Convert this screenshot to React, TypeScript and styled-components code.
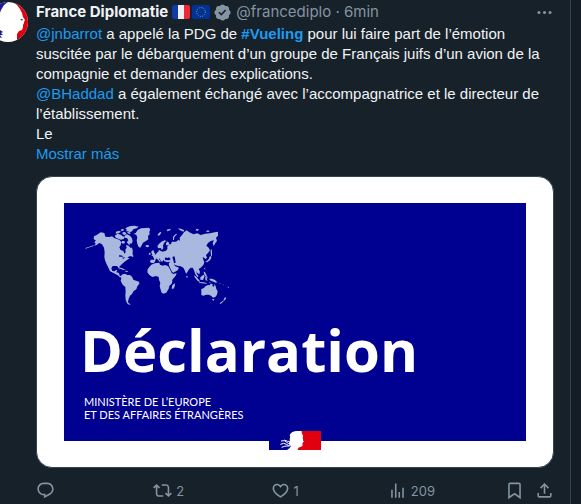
import React from "react";
import styled, { createGlobalStyle } from "styled-components";

const GlobalStyle = createGlobalStyle`
  *, *::before, *::after { box-sizing: border-box; }
  html { background: #141d26; }
  body {
    margin: 0;
    overflow: hidden;
    color: #f0f3f4;
    font-family: Inter, "Liberation Sans", sans-serif;
    font-size: 15px;
    line-height: 20px;
  }
`;

const Timeline = styled.main`
  min-height: 100vh;
  margin-right: 10px;
  padding: 2px 16px 0 0;
  border-right: 1px solid #38444d;
  background: #17212a;
  overflow: hidden;
`;

const Post = styled.article`
  display: flex;
  gap: 8px;
  margin-left: -12px;
`;

const AvatarLink = styled.a`
  flex: none;
  width: 40px;
  height: 40px;
  border-radius: 50%;
  overflow: hidden;
  svg { display: block; width: 100%; height: 100%; }
`;

const Content = styled.div`
  flex: 1;
  min-width: 0;
`;

const Header = styled.header`
  display: flex;
  align-items: center;
  height: 20px;
  margin-bottom: 2px;
`;

const Name = styled.a`
  color: #f0f3f4;
  font-weight: 700;
  text-decoration: none;
  white-space: nowrap;
`;

const Flags = styled.span`
  display: flex;
  gap: 2px;
  margin: 0 3px 0 4px;
`;

const Badge = styled.span`
  display: flex;
  margin-right: 4px;
  color: #8494a2;
`;

const Meta = styled.span`
  color: #8494a2;
  white-space: nowrap;
  a { color: inherit; text-decoration: none; }
`;

const IconButton = styled.button<{ $push?: boolean }>`
  display: flex;
  align-items: center;
  gap: 4px;
  padding: 0;
  margin-left: ${(p) => (p.$push ? "auto" : "0")};
  border: 0;
  background: none;
  color: #8494a2;
  font: inherit;
  font-size: 13px;
  line-height: 16px;
  cursor: pointer;
`;

const Body = styled.p`
  margin: 0;
  font-family: "Liberation Sans", Arial, sans-serif;
`;

const TextLink = styled.a<{ $strong?: boolean }>`
  color: #1d9bf0;
  font-weight: ${(p) => (p.$strong ? 700 : 400)};
  text-decoration: none;
`;

const Media = styled.figure`
  margin: 12px 0 0;
  padding: 26px 27px;
  border: 1px solid #38444d;
  border-radius: 16px;
  background: #fff;
`;

const Poster = styled.div`
  position: relative;
  padding: 12px 16px 20px;
  background: #000091;
  color: #fff;
`;

const MapArt = styled.svg`
  display: block;
  width: 160px;
  height: 100px;
`;

const Headline = styled.h2`
  margin: 5px 0 0;
  font-family: "Open Sans", sans-serif;
  font-size: 58px;
  font-weight: 700;
  line-height: 60px;
`;

const Ministry = styled.p`
  margin: 15px 0 0;
  padding-left: 4px;
  font-family: Lato, sans-serif;
  font-size: 11px;
  line-height: 13px;
`;

const Emblem = styled.svg`
  position: absolute;
  left: 50%;
  bottom: -9px;
  width: 52px;
  height: 19px;
  transform: translateX(-50%);
`;

const Actions = styled.footer`
  display: flex;
  margin-top: 13px;
`;

const ActionSlot = styled.div`
  flex: 1;
`;

const EndActions = styled.div`
  display: flex;
  gap: 11px;
`;

const paths = {
  reply:
    "M1.751 10c0-4.42 3.584-8 8.005-8h4.366c4.49 0 8.129 3.64 8.129 8.13 0 2.96-1.607 5.68-4.196 7.11l-8.054 4.46v-3.69h-.067c-4.49.1-8.183-3.51-8.183-8.01zm8.005-6c-3.317 0-6.005 2.69-6.005 6 0 3.37 2.77 6.08 6.138 6.01l.351-.01h1.761v2.3l5.087-2.81c1.951-1.08 3.163-3.13 3.163-5.36 0-3.39-2.744-6.13-6.129-6.13H9.756z",
  repost:
    "M4.5 3.88l4.432 4.14-1.364 1.46L5.5 7.55V16c0 1.1.896 2 2 2H13v2H7.5c-2.209 0-4-1.79-4-4V7.55L1.432 9.48.068 8.02 4.5 3.88zM16.5 6H11V4h5.5c2.209 0 4 1.79 4 4v8.45l2.068-1.93 1.364 1.46-4.432 4.14-4.432-4.14 1.364-1.46 2.068 1.93V8c0-1.1-.896-2-2-2z",
  like:
    "M16.697 5.5c-1.222-.06-2.679.51-3.89 2.16l-.805 1.09-.806-1.09C9.984 6.01 8.526 5.44 7.304 5.5c-1.243.07-2.349.78-2.91 1.91-.552 1.12-.633 2.78.479 4.82 1.074 1.97 3.257 4.27 7.129 6.61 3.87-2.34 6.052-4.64 7.126-6.61 1.111-2.04 1.03-3.7.477-4.82-.561-1.13-1.666-1.84-2.908-1.91zm4.187 7.69c-1.351 2.48-4.001 5.12-8.379 7.67l-.503.3-.504-.3c-4.379-2.55-7.029-5.19-8.382-7.67-1.36-2.5-1.41-4.86-.514-6.67.887-1.79 2.647-2.91 4.601-3.01 1.651-.09 3.368.56 4.798 2.01 1.429-1.45 3.146-2.1 4.796-2.01 1.954.1 3.714 1.22 4.601 3.01.896 1.81.846 4.17-.514 6.67z",
  views:
    "M8.75 21V3h2v18h-2zM18 21V8.5h2V21h-2zM4 21l.004-10h2L6 21H4zm9.248 0v-7h2v7h-2z",
  bookmark:
    "M4 4.5C4 3.12 5.119 2 6.5 2h11C18.881 2 20 3.12 20 4.5v18.44l-8-5.71-8 5.71V4.5zM6.5 4c-.276 0-.5.22-.5.5v14.56l6-4.29 6 4.29V4.5c0-.28-.224-.5-.5-.5h-11z",
  share:
    "M12 2.59l5.7 5.7-1.41 1.42L13 6.41V16h-2V6.41l-3.3 3.3-1.41-1.42L12 2.59zM21 15l-.02 3.51c0 1.38-1.12 2.49-2.5 2.49H5.5C4.11 21 3 19.88 3 18.5V15h2v3.5c0 .28.22.5.5.5h12.98c.28 0 .5-.22.5-.5L19 15h2z",
  more:
    "M3 12c0-1.1.9-2 2-2s2 .9 2 2-.9 2-2 2-2-.9-2-2zm9 2c1.1 0 2-.9 2-2s-.9-2-2-2-2 .9-2 2 .9 2 2 2zm7 0c1.1 0 2-.9 2-2s-.9-2-2-2-2 .9-2 2 .9 2 2 2z",
  verified:
    "M20.396 11c-.018-.646-.215-1.275-.57-1.816-.354-.54-.852-.972-1.438-1.246.223-.607.27-1.264.14-1.897-.131-.634-.437-1.218-.882-1.687-.47-.445-1.053-.75-1.687-.882-.633-.13-1.29-.083-1.897.14-.273-.587-.704-1.086-1.245-1.44S11.647 1.62 11 1.604c-.646.017-1.273.213-1.813.568s-.969.854-1.24 1.44c-.608-.223-1.267-.272-1.902-.14-.635.13-1.22.436-1.69.882-.445.47-.749 1.055-.878 1.688-.13.633-.08 1.29.144 1.896-.587.274-1.087.705-1.443 1.245-.356.54-.555 1.17-.574 1.817.02.647.218 1.276.574 1.817.356.54.856.972 1.443 1.245-.224.606-.274 1.263-.144 1.896.13.634.433 1.218.877 1.688.47.443 1.054.747 1.687.878.633.132 1.29.084 1.897-.136.274.586.705 1.084 1.246 1.439.54.354 1.17.551 1.816.569.647-.016 1.276-.213 1.817-.567s.972-.854 1.245-1.44c.604.239 1.266.296 1.903.164.636-.132 1.22-.447 1.68-.907.46-.46.776-1.044.908-1.681s.075-1.299-.165-1.903c.586-.274 1.084-.705 1.439-1.246.354-.54.551-1.17.569-1.816zM9.662 14.85l-3.429-3.428 1.293-1.302 2.072 2.072 4.4-4.794 1.347 1.246z",
};

function Icon({ name, box = 24 }: { name: keyof typeof paths; box?: number }) {
  return (
    <svg width="19" height="19" viewBox={`0 0 ${box} ${box}`} fill="currentColor" aria-hidden="true">
      <path d={paths[name]} />
    </svg>
  );
}

function Avatar() {
  return (
    <svg viewBox="0 0 40 40" aria-hidden="true">
      <rect width="40" height="40" fill="#fff" />
      <path d="M0 0h20l-4 3-3 5-3 8-10 6z" fill="#1b1b9b" />
      <path d="M0 26l12 2 3 2-2 1 2 2-3 0 2 3-4-1-10-2z" fill="#1b1b9b" />
      <path d="M24 0h16v40H29v-8l2-3 3-1 1-3 0-2 1-2 0-1 1-2-2-3-1-4-2-4-3-4-3-2z" fill="#e1000f" />
      <path d="M32 17l3 0-1 2z" fill="#555" />
    </svg>
  );
}

function FrenchFlag() {
  return (
    <svg width="18" height="14" viewBox="0 0 18 14" role="img" aria-label="France">
      <clipPath id="fr"><rect width="18" height="14" rx="2" /></clipPath>
      <g clipPath="url(#fr)">
        <rect width="6" height="14" fill="#0f3aa8" />
        <rect x="6" width="6" height="14" fill="#eee" />
        <rect x="12" width="6" height="14" fill="#ed2939" />
      </g>
    </svg>
  );
}

function EuropeanFlag() {
  return (
    <svg width="18" height="14" viewBox="0 0 18 14" role="img" aria-label="Union européenne">
      <rect width="18" height="14" rx="2" fill="#039" />
      <circle cx="9" cy="7" r="4.4" fill="none" stroke="#b5a436" strokeWidth="1" strokeDasharray="1 1.3" />
    </svg>
  );
}

function WorldMap() {
  return (
    <MapArt viewBox="0 0 480 300" fill="#a9b8de" role="img" aria-label="Carte du monde">
      {/* North America */}
      <path d="M42 64L50 60 62 52 73 54 76 65 88 66 96 64 104 70 118 74 124 82 122 91 118 97 122 105 130 108 133 116 137 112 136 104 140 98 138 90 146 92 151 98 156 98 158 106 158 118 158 123 148 124 142 128 149 130 141 135 133 141 126 147 118 155 119 164 115 158 111 153 98 153 94 160 97 168 104 169 108 165 112 166 109 172 117 174 119 182 126 184 128 188 120 187 112 180 102 175 90 169 86 160 80 148 75 136 73 125 74 112 72 98 66 88 58 84 50 90 42 92 47 86 43 81 48 77 41 72Z" />
      <path d="M118 120l9 2 2 5-5-2-7 0zM128 128l6-2 0 3-6 3z" fill="#000091" />
      <path d="M16 99l10-3 14-5 1 2-12 4-12 4zM116 158l7 0 9 4 4 4-8-2-10-4zM136 167l8 1-2 3-6-1zM156 120l5 2-2 4-5-2z" />
      {/* Arctic islands */}
      <path d="M104 62l9-6 10 3 5 5 6 1-3 7-8 2-8-3-7-2zM108 50l9-3 6 3-7 5-9 1zM122 44l8-3 2 5-7 3zM136 40l7-4 9-3 12-1 12 3-6 5-10 3-4 6-7 3-5-3-7 0 4-4zM128 52l7-1 5 6-6 3-7-3zM134 62l7-4 9 4 6 8 2 10-4 6-5-1 1 5-5-2-5-7 5-4-3-7-8-2zM126 78l7 0 2 6-6 2-5-3zM143 50l10 4-4 3-7-3z" />
      {/* Greenland and Iceland */}
      <path d="M160 57l7-3 6-9 10-5 12-1 12-1 4 6-3 6 1 8-5 5 1 10-7 5-9 5-4 8-4 7-5-2-4-9-2-11 2-8-3-9-5-1zM197 91l8-1 3 4-5 3-6-2z" />
      {/* South America */}
      <path d="M123 182l5-4 7-2 7 4 8 0 7 7 3 7 8 3 9 3 1 6-6 8-3 9-8 5-5 9-6 5-4 9-2 9 2 5 7 3-6 1-6-4-4-11-1-13 1-12-1-13-8-7-6-12 2-7z" />
      {/* Africa and Madagascar */}
      <path d="M214 149L224 145 238 143 240 149 249 152 254 150 264 153 270 163 275 174 280 177 290 174 287 182 277 194 276 205 268 213 266 221 259 233 250 236 245 233 241 221 239 213 241 204 237 194 236 186 228 183 217 186 208 180 202 172 203 163 208 156ZM280 208l5-3-1 10-5 8-4-3 2-9z" />
      {/* Europe and Asia */}
      <path d="M212 134L223 134 220 126 217 122 226 119 231 113 236 109 236 104 241 107 248 110 258 107 262 102 262 94 267 92 258 90 258 84 263 80 258 78 252 84 249 92 250 99 246 105 242 99 235 100 232 94 236 88 244 80 254 76 262 79 268 84 266 88 272 88 276 80 288 80 296 74 300 78 299 68 306 60 312 52 320 46 328 52 340 58 352 55 362 60 376 56 390 55 404 52 414 50 414 62 408 68 411 78 406 84 401 94 398 84 402 76 392 78 384 84 379 92 386 98 390 106 384 114 378 120 381 128 377 132 372 128 368 126 370 134 373 142 370 150 362 158 356 162 360 170 358 178 352 174 350 168 350 176 356 184 352 186 346 178 342 166 338 158 332 158 326 164 322 172 318 176 314 166 310 158 302 154 292 152 286 150 281 148 286 154 297 158 293 166 280 173 276 170 268 154 266 146 270 140 262 142 252 138 250 134 246 142 242 136 236 128 238 134 242 138 240 142 234 134 228 130 226 137 222 144 214 144 210 140Z" />
      {/* Inland seas */}
      <path d="M277 126l6-2 2 6 2 13-5 2-2-9zM254 132l3-5 5 2 5-2 5 6-5 3-11-1z" fill="#000091" />
      <path d="M215 108l5-3 2 6 4 7-4 4-8 1 3-5-3-4zM208 113l4 1-1 5-5 0zM234 57l7-7 3 3-5 8-6 1zM260 44l12-3-1 5-9 3zM279 75l0-10 9-9 3 2-8 8-1 9zM294 40l9 1 10 5-3 4-10-4zM348 42l9 1-4 5-6-2zM378 48l7-2 4 4-8 1z" />
      <path d="M392 104l3-1 1 8 0 11-3 1-1-11zM388 126l5-4 1 6-4 8-9 6-5-2 7-4 4-5zM319 182l4 2-1 5-3-2zM372 160l4-2-1 6zM371 170l4 1 3 7 4 7-5 0-4-6z" />
      {/* South-east Asia and Oceania */}
      <path d="M342 181l7 4 10 12 0 4-6-3-9-11zM361 187l9-8 4 4-5 12-8-1zM375 187l9 0-4 4 3 6-6-1zM357 201l13 1 10 2-1 2-20-2zM388 191l8 0 9 4 7 7-5 1-7-3-10-4zM386 203l6-1-2 3zM418 204l5 2-3 1zM443 214l4 4-3 1zM428 207l3 3-2 1z" />
      <path d="M364 222L372 219 376 214 384 210 388 211 392 206 398 207 397 213 402 215 404 207 407 214 409 222 413 229 411 239 406 246 399 248 394 243 387 239 378 239 370 242 364 240 364 230ZM396 252l7 0-3 6zM435 246l4 4-7 8-2-2zM429 257l2 2-9 8-3-2z" />
    </MapArt>
  );
}

function RepublicEmblem() {
  return (
    <Emblem viewBox="0 0 156 57" role="img" aria-label="Marianne">
      <rect width="80" height="57" fill="#000091" />
      <path d="M62 12q5-10 19-12h22v57H54q10-5 12-13-9-4-5-12 4-2 1-8 3-5 0-12z" fill="#fff" />
      <path d="M98 0h58v57H86l2-7 11-4 2-3-1-5 3-6 3-2-5-8 1-8-4-9z" fill="#e1000f" />
      <path d="M36 30q12-4 17 4 4 5 13 4M34 40q11-6 18 0 5 5 14 2M38 49q10-4 16-4h8M46 27l10 4 6 0" fill="none" stroke="#fff" strokeWidth="3" />
    </Emblem>
  );
}

export default function App() {
  return (
    <>
      <GlobalStyle />
      <Timeline>
        <Post>
          <AvatarLink href="#profile" aria-label="France Diplomatie"><Avatar /></AvatarLink>
          <Content>
            <Header>
              <Name href="#profile">France Diplomatie</Name>
              <Flags><FrenchFlag /><EuropeanFlag /></Flags>
              <Badge><Icon name="verified" box={22} /></Badge>
              <Meta><a href="#profile">@francediplo</a> · <a href="#post">6min</a></Meta>
              <IconButton $push aria-label="Más opciones"><Icon name="more" /></IconButton>
            </Header>
            <Body lang="fr">
              <TextLink href="#jnbarrot">@jnbarrot</TextLink> a appelé la PDG de{" "}
              <TextLink $strong href="#vueling">#Vueling</TextLink> pour lui faire part de l’émotion
              suscitée par le débarquement d’un groupe de Français juifs d’un avion de la compagnie
              et demander des explications.
              <br />
              <TextLink href="#bhaddad">@BHaddad</TextLink> a également échangé avec
              l’accompagnatrice et le directeur de l’établissement.
              <br />
              Le
              <br />
              <TextLink href="#post">Mostrar más</TextLink>
            </Body>
            <Media>
              <Poster lang="fr">
                <WorldMap />
                <Headline>Déclaration</Headline>
                <Ministry>
                  MINISTÈRE DE L’EUROPE
                  <br />
                  ET DES AFFAIRES ÉTRANGÈRES
                </Ministry>
                <RepublicEmblem />
              </Poster>
            </Media>
            <Actions>
              <ActionSlot><IconButton aria-label="Responder"><Icon name="reply" /></IconButton></ActionSlot>
              <ActionSlot><IconButton aria-label="2 reposts"><Icon name="repost" />2</IconButton></ActionSlot>
              <ActionSlot><IconButton aria-label="1 me gusta"><Icon name="like" />1</IconButton></ActionSlot>
              <ActionSlot><IconButton aria-label="209 visualizaciones"><Icon name="views" />209</IconButton></ActionSlot>
              <EndActions>
                <IconButton aria-label="Guardar"><Icon name="bookmark" /></IconButton>
                <IconButton aria-label="Compartir"><Icon name="share" /></IconButton>
              </EndActions>
            </Actions>
          </Content>
        </Post>
      </Timeline>
    </>
  );
}
